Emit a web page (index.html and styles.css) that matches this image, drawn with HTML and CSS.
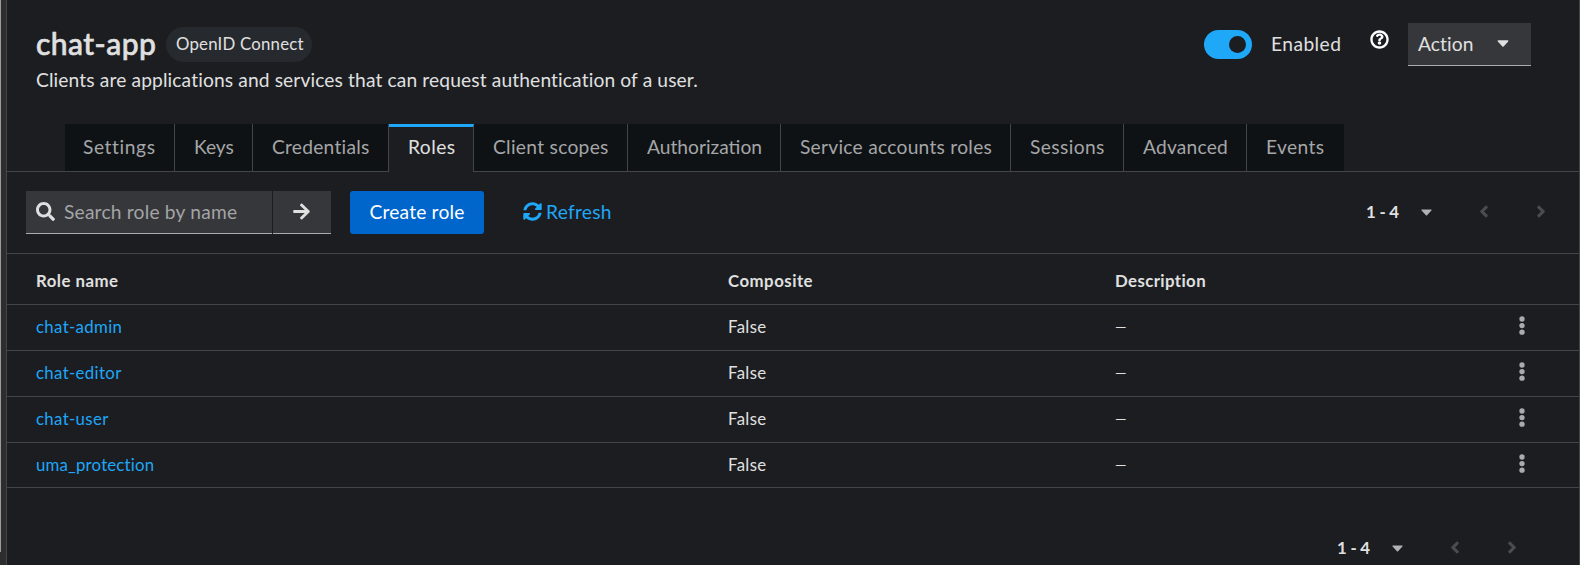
FILE: index.html
```
<!DOCTYPE html>
<html lang="en">
<head>
<meta charset="utf-8">
<title>Client details</title>
<link rel="stylesheet" href="styles.css">
</head>
<body>
<svg class="defs" aria-hidden="true">
  <symbol id="caret" viewBox="0 0 320 192"><path d="M31 6h258c18 0 27 21 14 34L177 176c-9 9-25 9-34 0L17 40C4 27 13 6 31 6z"/></symbol>
  <symbol id="left" viewBox="0 0 256 512"><path d="M31.7 239l136-136c9.400-9.400 24.600-9.400 33.900 0l22.600 22.600c9.400 9.400 9.400 24.600 0 33.900L127.900 256l96.400 96.400c9.400 9.400 9.400 24.600 0 33.900L201.700 409c-9.400 9.400-24.600 9.400-33.900 0l-136-136c-9.500-9.400-9.500-24.600-.1-34z"/></symbol>
  <symbol id="right" viewBox="0 0 256 512"><path d="M224.300 273l-136 136c-9.400 9.400-24.600 9.400-33.900 0l-22.600-22.600c-9.400-9.400-9.400-24.600 0-33.900l96.400-96.400-96.400-96.400c-9.400-9.400-9.400-24.600 0-33.900L54.300 103c9.400-9.400 24.600-9.400 33.900 0l136 136c9.500 9.400 9.500 24.600.1 34z"/></symbol>
  <symbol id="kebab" viewBox="0 0 6 20"><circle cx="3" cy="3" r="2.650"/><circle cx="3" cy="9.600" r="2.650"/><circle cx="3" cy="16.200" r="2.650"/></symbol>
</svg>
<div class="app">
  <div class="gutter"><div class="thumb"></div></div>
  <main class="page">
    <header class="head">
      <div class="intro">
        <div class="title-row"><h1 class="title">chat-app</h1><span class="badge">OpenID Connect</span></div>
        <p class="subtitle">Clients are applications and services that can request authentication of a user.</p>
      </div>
      <div class="head-actions">
        <span class="switch"><span class="knob"></span></span>
        <span class="enabled">Enabled</span>
        <svg class="help" viewBox="0 0 512 512"><path d="M256 8C119 8 8 119.100 8 256c0 137 111 248 248 248s248-111 248-248C504 119.100 393 8 256 8zm0 432c-101.700 0-184-82.300-184-184 0-101.700 82.300-184 184-184 101.700 0 184 82.300 184 184 0 101.700-82.300 184-184 184zm107.200-255.200c0 67.100-72.400 68.100-72.400 92.900V284c0 6.600-5.400 12-12 12h-45.600c-6.600 0-12-5.400-12-12v-8.700c0-35.700 27.100-50 47.600-61.500 17.600-9.800 28.300-16.500 28.300-29.600 0-17.200-22-28.700-39.800-28.700-23.200 0-33.900 11-48.900 30-4.100 5.100-11.500 6.100-16.700 2.100l-27.800-21.100c-5.100-3.900-6.300-11.100-2.600-16.400C184.800 115.400 214.900 96 261.100 96c48.400 0 102.100 38.500 102.100 88.800zM302 352c0 25.400-20.600 46-46 46s-46-20.600-46-46 20.600-46 46-46 46 20.600 46 46z"/></svg>
        <button class="action"><span>Action</span><svg class="action-caret"><use href="#caret"/></svg></button>
      </div>
    </header>
    <nav class="tabs">
      <a class="tab settings">Settings</a>
      <a class="tab keys">Keys</a>
      <a class="tab credentials">Credentials</a>
      <a class="tab roles current">Roles</a>
      <a class="tab scopes">Client scopes</a>
      <a class="tab authz">Authorization</a>
      <a class="tab service">Service accounts roles</a>
      <a class="tab sessions">Sessions</a>
      <a class="tab advanced">Advanced</a>
      <a class="tab events">Events</a>
    </nav>
    <div class="toolbar">
      <div class="search">
        <svg class="search-icon" viewBox="0 0 512 512"><path d="M505 442.700L405.300 343c-4.500-4.500-10.600-7-17-7H372c27.600-35.300 44-79.700 44-128C416 93.100 322.900 0 208 0S0 93.100 0 208s93.100 208 208 208c48.300 0 92.700-16.400 128-44v16.300c0 6.400 2.500 12.500 7 17l99.700 99.700c9.400 9.400 24.600 9.400 33.900 0l28.300-28.300c9.400-9.400 9.400-24.600.1-34zM208 336c-70.700 0-128-57.200-128-128 0-70.700 57.200-128 128-128 70.700 0 128 57.200 128 128 0 70.700-57.200 128-128 128z"/></svg>
        <span class="search-text">Search role by name</span>
      </div>
      <button class="go"><svg class="arrow" viewBox="0 0 448 512"><path d="M190.500 66.900l22.200-22.200c9.400-9.400 24.600-9.400 33.900 0L441 239c9.400 9.400 9.400 24.600 0 33.900L246.600 467.300c-9.400 9.400-24.600 9.400-33.900 0l-22.200-22.200c-9.500-9.500-9.300-25 .4-34.300L311.400 296H24c-13.300 0-24-10.700-24-24v-32c0-13.300 10.700-24 24-24h287.400L190.900 101.200c-9.800-9.300-10-24.800-.4-34.300z"/></svg></button>
      <button class="create">Create role</button>
      <a class="refresh"><svg class="sync" viewBox="0 0 512 512"><path d="M370.720 133.280C339.458 104.008 298.888 87.962 255.848 88c-77.458.068-144.328 53.178-162.791 126.850-1.344 5.363-6.122 9.150-11.651 9.150H24.103c-7.498 0-13.194-6.807-11.807-14.176C33.933 94.924 134.813 8 256 8c66.448 0 126.791 26.136 171.315 68.685L463.030 40.970C478.149 25.851 504 36.559 504 57.941V192c0 13.255-10.745 24-24 24H345.941c-21.382 0-32.090-25.851-16.971-40.971l41.750-41.749zM32 296h134.059c21.382 0 32.090 25.851 16.971 40.971l-41.750 41.750c31.262 29.273 71.835 45.319 114.876 45.280 77.418-.070 144.315-53.144 162.787-126.849 1.344-5.363 6.122-9.150 11.651-9.150h57.304c7.498 0 13.194 6.807 11.807 14.176C478.067 417.076 377.187 504 256 504c-66.448 0-126.791-26.136-171.315-68.685L48.970 471.030C33.851 486.149 8 475.441 8 454.059V320c0-13.255 10.745-24 24-24z"/></svg><span>Refresh</span></a>
      <div class="pager">
        <span class="range">1 - 4</span><svg class="range-caret"><use href="#caret"/></svg><svg class="chev"><use href="#left"/></svg><svg class="chev"><use href="#right"/></svg>
      </div>
    </div>
    <div class="table">
      <div class="row header"><span>Role name</span><span>Composite</span><span class="c-desc">Description</span><span></span></div>
      <div class="row"><a class="link">chat-admin</a><span>False</span><span class="dash">—</span><svg class="kebab"><use href="#kebab"/></svg></div>
      <div class="row"><a class="link">chat-editor</a><span>False</span><span class="dash">—</span><svg class="kebab"><use href="#kebab"/></svg></div>
      <div class="row"><a class="link">chat-user</a><span>False</span><span class="dash">—</span><svg class="kebab"><use href="#kebab"/></svg></div>
      <div class="row last"><a class="link uma">uma_protection</a><span>False</span><span class="dash">—</span><svg class="kebab"><use href="#kebab"/></svg></div>
    </div>
    <footer class="foot">
      <div class="pager">
        <span class="range">1 - 4</span><svg class="range-caret"><use href="#caret"/></svg><svg class="chev"><use href="#left"/></svg><svg class="chev"><use href="#right"/></svg>
      </div>
    </footer>
  </main>
</div>
</body>
</html>
```

FILE: styles.css
```
* { box-sizing: border-box; }
body { margin: 0; background: #1b1d21; color: #e0e0e0; font: 19.2px/28px Lato, "Open Sans", sans-serif; overflow: hidden; }
button { border: 0; margin: 0; padding: 0; font: inherit; color: inherit; }
svg { display: block; flex: none; fill: currentColor; }
.defs { display: none; }
.app { display: flex; width: 1580px; height: 565px; }
.gutter { width: 6px; background: #2d2d2e; }
.thumb { width: 1px; height: 552px; background: #9b9b9b; }
.page { width: 1574px; height: 565px; border-left: 1px solid #444548; border-right: 1px solid #444548; display: flex; flex-direction: column; }

.head { height: 124px; flex: none; display: flex; justify-content: space-between; padding: 23px 48px 0 29px; }
.title-row { display: flex; height: 43px; padding-top: 4px; gap: 9px; }
.title { margin: 0; width: 121px; padding-top: 1px; font-size: 30px; line-height: 30px; font-weight: 500; letter-spacing: .45px; white-space: nowrap; -webkit-text-stroke: .6px currentColor; }
.badge { width: 146px; height: 35px; border-radius: 18px; background: #26292d; padding: 3px 0 0 10px; font-size: 16.800px; line-height: 27px; letter-spacing: .22px; }
.subtitle { margin: 0; line-height: 28px; letter-spacing: .13px; }
.head-actions { display: flex; height: 43px; }
.switch { width: 48px; height: 29px; margin-top: 7px; border-radius: 15px; background: #1fa7f8; padding: 6px; display: flex; justify-content: flex-end; }
.knob { width: 17px; height: 17px; border-radius: 50%; background: #1b1d21; }
.enabled { width: 71px; margin: 7px 0 0 19px; letter-spacing: .45px; }
.help { width: 19px; height: 19px; margin: 7px 19px 0 28px; color: #fff; }
.action { width: 123px; height: 43px; background: #36373a; border-bottom: 1px solid #aaabac; display: flex; align-items: center; padding: 0 22px 1px 10px; justify-content: space-between; letter-spacing: .1px; }
.action-caret { width: 12px; height: 7px; }

.tabs { display: flex; flex: none; height: 48px; padding-left: 58px; border-bottom: 1px solid #444548; }
.tab { height: 47px; padding: 9px 0 0 19px; background: #0f1214; color: #a5a6a8; border-right: 1px solid #444548; white-space: nowrap; }
.settings { width: 110px; letter-spacing: .6px; padding-left: 18px; }
.keys { width: 78px; }
.credentials { width: 136px; letter-spacing: .25px; }
.roles { width: 85px; letter-spacing: .45px; }
.scopes { width: 154px; letter-spacing: .3px; }
.authz { width: 153px; }
.service { width: 230px; letter-spacing: .27px; }
.sessions { width: 113px; letter-spacing: .4px; }
.advanced { width: 123px; letter-spacing: .2px; }
.events { width: 97px; letter-spacing: .4px; border-right: 0; }
.tab.current { height: 48px; padding-top: 6px; background: #1b1d21; color: #e0e0e0; border-top: 3px solid #1fa7f8; }

.toolbar { height: 82px; flex: none; display: flex; padding: 19px 27px 0 19px; border-bottom: 1px solid #444548; }
.search { width: 246px; height: 43px; background: #36373a; border-bottom: 1px solid #aaabac; display: flex; padding: 0 0 0 10px; }
.search-icon { width: 19px; height: 19px; margin-top: 11px; }
.search-text { margin: 7px 0 0 9px; color: #a3a4a6; letter-spacing: .2px; }
.go { width: 58px; height: 43px; margin-left: 1px; background: #36373a; border-bottom: 1px solid #aaabac; display: flex; justify-content: center; align-items: center; padding: 0 2px 1px 0; }
.arrow { width: 17px; height: 19px; }
.create { width: 134px; height: 43px; margin-left: 19px; padding-bottom: 2px; border-radius: 3px; background: #06c; color: #fff; letter-spacing: .2px; }
.refresh { display: flex; height: 43px; margin-left: 39px; padding-top: 7px; gap: 4px; color: #1fa7f8; letter-spacing: .28px; }
.sync { width: 19px; height: 19px; margin-top: 4px; }

.pager { display: flex; height: 43px; align-items: center; margin-left: auto; padding-right: 6px; font-size: 16.800px; font-weight: 700; }
.range { width: 33px; margin-top: -2px; letter-spacing: -.2px; white-space: nowrap; }
.range-caret { width: 11px; height: 7px; margin: -1px 0 0 22px; color: #b0b1b3; }
.chev { width: 10px; height: 19px; margin: -2px 0 0 47px; color: #4b4c4f; }

.row { height: 46px; display: grid; grid-template-columns: 692px 387px 403.500px 6px; padding: 8px 0 0 29px; border-bottom: 1px solid #444548; font-size: 16.800px; letter-spacing: .35px; }
.header { height: 51px; padding-top: 13px; font-weight: 700; letter-spacing: .5px; }
.c-desc { letter-spacing: .4px; }
.last { height: 45px; }
.link { color: #1fa7f8; }
.uma { letter-spacing: .2px; }
.dash { font-size: 14.500px; }
.kebab { width: 6px; height: 20px; margin-top: 3px; color: #aaabac; }
.foot { display: flex; padding: 39px 56px 0 0; }
```
